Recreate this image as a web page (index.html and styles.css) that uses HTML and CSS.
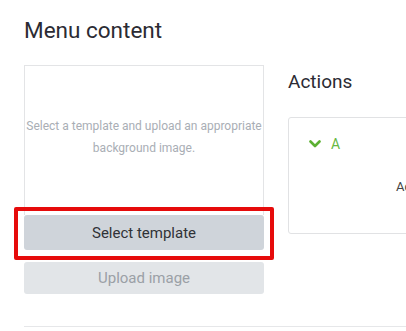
FILE: index.html
```html
<!DOCTYPE html>
<html lang="en">
<head>
    <meta charset="UTF-8">
    <meta name="viewport" content="width=device-width, initial-scale=1.0">
    <title>Menu content</title>
    <link rel="stylesheet" href="styles.css">
</head>
<body>
    <div class="page">
        <h1>Menu content</h1>
        <div class="columns">
            <div class="menu-col">
                <div class="preview">
                    <p>Select a template and upload an appropriate background image.</p>
                </div>
                <div class="highlight">
                    <button class="btn btn-select">Select template</button>
                </div>
                <button class="btn btn-upload" disabled>Upload image</button>
            </div>
            <div class="actions-col">
                <h2>Actions</h2>
                <div class="actions-box">
                    <div class="action-head">
                        <svg class="chevron" width="12" height="8" viewBox="0 0 12 8">
                            <polyline points="1.5,1.5 6,6 10.5,1.5" fill="none" stroke="#5cb032" stroke-width="2.6" stroke-linecap="round" stroke-linejoin="round"/>
                        </svg>
                        <span>A</span>
                    </div>
                    <div class="action-body">Action text</div>
                </div>
            </div>
        </div>
        <hr class="divider">
    </div>
</body>
</html>
```

FILE: styles.css
```css
body {
    margin: 0;
    font-family: Roboto, "Liberation Sans", Arial, sans-serif;
    background: #ffffff;
    overflow: hidden;
}
.page {
    padding: 18px 0 0 24px;
    width: 700px;
}
h1 {
    margin: 0 0 23px;
    font-size: 22.5px;
    line-height: 24px;
    font-weight: 400;
    color: #2b2b33;
}
.columns {
    display: flex;
    gap: 24px;
}
.menu-col {
    width: 240px;
    display: flex;
    flex-direction: column;
}
.preview {
    height: 150px;
    border: 1px solid #e3e4e6;
    border-bottom: none;
    box-sizing: border-box;
    display: flex;
    align-items: center;
    justify-content: center;
    padding-bottom: 8px;
}
.preview p {
    margin: 0;
    text-align: center;
    font-size: 12px;
    line-height: 22px;
    color: #a9aeb5;
}
.highlight {
    position: relative;
}
.highlight::after {
    content: "";
    position: absolute;
    top: -8px;
    left: -10px;
    right: -10px;
    bottom: -10px;
    border: 4px solid #e60b0b;
    border-radius: 2px;
    pointer-events: none;
}
.btn {
    display: block;
    width: 100%;
    border: none;
    border-radius: 3px;
    font-family: inherit;
    font-size: 15px;
}
.btn-select {
    height: 35px;
    background: #cfd4da;
    color: #2f3237;
}
.btn-upload {
    height: 32px;
    margin-top: 12px;
    background: #e2e5e8;
    color: #9ba0a6;
}
.actions-col {
    width: 300px;
}
h2 {
    margin: 6px 0 24px;
    font-size: 19px;
    line-height: 22px;
    font-weight: 400;
    color: #2b2b33;
}
.actions-box {
    height: 117px;
    box-sizing: border-box;
    border: 1px solid #e1e2e4;
    border-radius: 3px;
    padding: 16px 20px;
}
.action-head {
    display: flex;
    align-items: center;
    gap: 10px;
    font-size: 14px;
    line-height: 20px;
    color: #67b843;
}
.action-body {
    margin-top: 23px;
    padding-left: 87px;
    font-size: 13px;
    line-height: 20px;
    color: #444444;
    white-space: nowrap;
}
.divider {
    margin: 32px 0 0;
    border: none;
    border-top: 1px solid #e6e7e9;
}
```
